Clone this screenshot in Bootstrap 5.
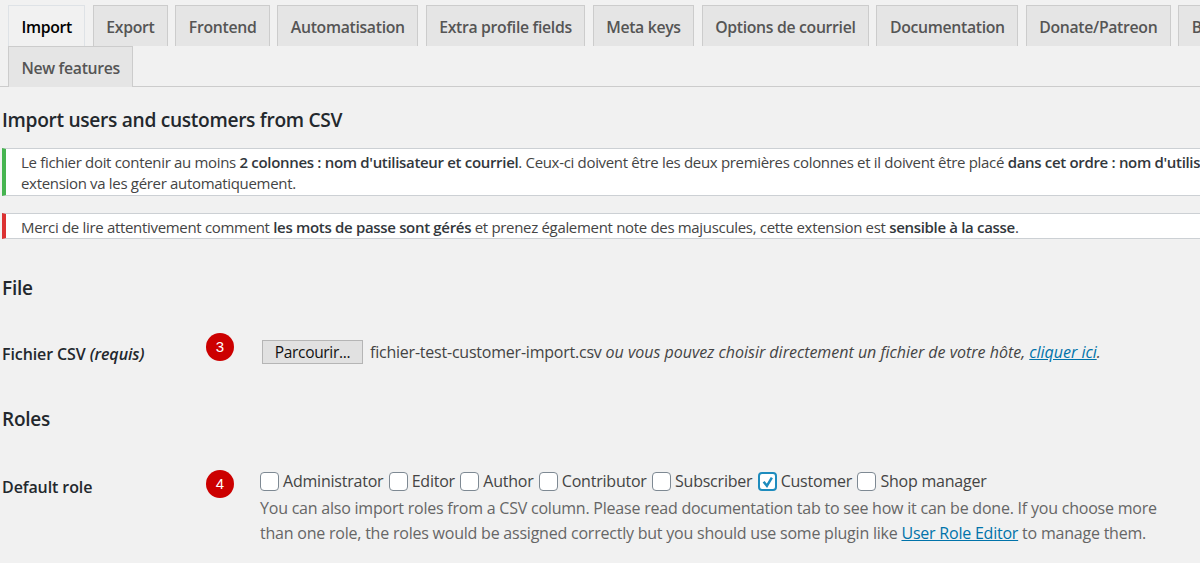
<!doctype html>
<html lang="fr"><head><meta charset="utf-8"><title>Import</title>
<link rel="stylesheet" href="https://cdn.jsdelivr.net/npm/bootstrap@5.3.0/dist/css/bootstrap.min.css">
<style>
html,body{height:563px;overflow:hidden;background:#f1f1f1}
body{font-family:"Open Sans","Noto Sans",sans-serif;font-size:16px;color:#32373c;letter-spacing:-.22px}
.shell{width:1330px}
.tabbar{padding:5px 0 0 8px;border-bottom:1px solid #ccc;column-gap:7.5px;height:87px}
.tabbar .nav-link{height:41px;padding:0 12.45px;border:1px solid #ccc;border-bottom:0;border-radius:0;background:#e5e5e5;color:#555;font-size:15.8px;letter-spacing:-.32px;font-weight:600;line-height:42px;margin:0}
.tabbar .nav-link.active{background:#f1f1f1;color:#000}
.pagetitle{font-size:19.2px;font-weight:600;color:#23282d;letter-spacing:-.32px;margin:20px 0 15px 2px;line-height:26px}
.notice-box{margin:0 0 17.5px 2px;background:#fff;border:1px solid #ccd0d4;border-left:4px solid #46b450;padding:2.5px 12px 0 15px;line-height:21.5px;font-size:15px;letter-spacing:-.32px;color:#444;white-space:nowrap}
.notice-box.bad{border-left-color:#dc3232}
.notice-box b{font-weight:600;color:#32373c}
.sectiontitle{font-size:19px;font-weight:600;color:#23282d;margin:0 0 0 2px;line-height:26px}
.r-title{margin-top:36px}
.labelcell{width:204px;margin-left:2px;font-weight:600;font-size:16px;letter-spacing:-.1px;color:#23282d}
.numdot{width:28px;height:28px;border-radius:50%;background:#c00;color:#fff;font-size:15px;letter-spacing:0;font-family:"Liberation Sans",sans-serif;flex:none}
.valuecell{margin-left:26px;color:#444}
.valuecell i{letter-spacing:-.01px}
.r-file .labelcell{margin-top:4px}
.r-file .numdot{margin-bottom:10px}
.r-file .valuecell{margin-left:28px;column-gap:7px}
.fakebtn{width:101px;height:24px;padding:0;border:1px solid #b5b5b5;border-radius:0;background:#e1e1e1;color:#111;font-size:15.5px;line-height:21px;letter-spacing:-.32px}
.fakebtn:hover{background:#e1e1e1;border-color:#b5b5b5;color:#111}
.valuecell a{color:#0073aa}
.rolebox{width:19px;height:19px;margin:0 4px 0 0;border:1px solid #7e8993;border-radius:4px;background-color:#fff;flex:none}
.rolebox:checked{background-color:#fff;border:2px solid #1e8cbe;background-size:16px;background-image:url("data:image/svg+xml,%3Csvg xmlns='http://www.w3.org/2000/svg' viewBox='0 0 20 20'%3E%3Cpath fill='none' stroke='%231e8cbe' stroke-width='3' d='M5 10l4 5 6-10'/%3E%3C/svg%3E")}
.rolelist{column-gap:5.3px;line-height:19px;padding-top:2px}
.hint{color:#666;line-height:25px;margin-top:5px;width:905px}
.r-file{margin-top:36px;height:30px}
.r-roles{margin-top:39px}
.r-default{margin-top:38px}
.r-default .labelcell{padding-top:5px}
</style></head><body>
<div class="shell">
<ul class="nav nav-tabs flex-wrap tabbar">
<li class="nav-item"><a class="nav-link active" href="#">Import</a></li>
<li class="nav-item"><a class="nav-link" href="#">Export</a></li>
<li class="nav-item"><a class="nav-link" href="#">Frontend</a></li>
<li class="nav-item"><a class="nav-link" href="#">Automatisation</a></li>
<li class="nav-item"><a class="nav-link" href="#">Extra profile fields</a></li>
<li class="nav-item"><a class="nav-link" href="#">Meta keys</a></li>
<li class="nav-item"><a class="nav-link" href="#">Options de courriel</a></li>
<li class="nav-item"><a class="nav-link" href="#">Documentation</a></li>
<li class="nav-item"><a class="nav-link" href="#">Donate/Patreon</a></li>
<li class="nav-item"><a class="nav-link" href="#">Blog</a></li>
<li class="nav-item"><a class="nav-link" href="#">New features</a></li>
</ul>
<h1 class="pagetitle">Import users and customers from CSV</h1>
<div class="notice-box">Le fichier doit contenir au moins <b>2 colonnes : nom d'utilisateur et courriel</b>. Ceux-ci doivent être les deux premières colonnes et il doivent être placé <b>dans cet ordre : nom d'utilisateur et courriel</b>.<br>extension va les gérer automatiquement.</div>
<div class="notice-box bad">Merci de lire attentivement comment <b>les mots de passe sont gérés</b> et prenez également note des majuscules, cette extension est <b>sensible à la casse</b>.</div>
<h2 class="sectiontitle r-title">File</h2>
<div class="d-flex align-items-center r-file">
<div class="labelcell">Fichier CSV <i>(requis)</i></div>
<div class="numdot d-flex align-items-center justify-content-center">3</div>
<div class="valuecell d-flex align-items-center"><button type="button" class="btn fakebtn">Parcourir...</button><span>fichier-test-customer-import.csv <i>ou vous pouvez choisir directement un fichier de votre hôte, <a href="#">cliquer ici</a>.</i></span></div>
</div>
<h2 class="sectiontitle r-roles">Roles</h2>
<div class="d-flex align-items-start r-default">
<div class="labelcell">Default role</div>
<div class="numdot d-flex align-items-center justify-content-center">4</div>
<div class="valuecell">
<div class="d-flex rolelist">
<label class="d-flex align-items-center"><input type="checkbox" class="form-check-input rolebox">Administrator</label>
<label class="d-flex align-items-center"><input type="checkbox" class="form-check-input rolebox">Editor</label>
<label class="d-flex align-items-center"><input type="checkbox" class="form-check-input rolebox">Author</label>
<label class="d-flex align-items-center"><input type="checkbox" class="form-check-input rolebox">Contributor</label>
<label class="d-flex align-items-center"><input type="checkbox" class="form-check-input rolebox">Subscriber</label>
<label class="d-flex align-items-center"><input type="checkbox" class="form-check-input rolebox" checked>Customer</label>
<label class="d-flex align-items-center"><input type="checkbox" class="form-check-input rolebox">Shop manager</label>
</div>
<div class="hint">You can also import roles from a CSV column. Please read documentation tab to see how it can be done. If you choose more than one role, the roles would be assigned correctly but you should use some plugin like <a href="#">User Role Editor</a> to manage them.</div>
</div>
</div>
</div>
</body></html>
